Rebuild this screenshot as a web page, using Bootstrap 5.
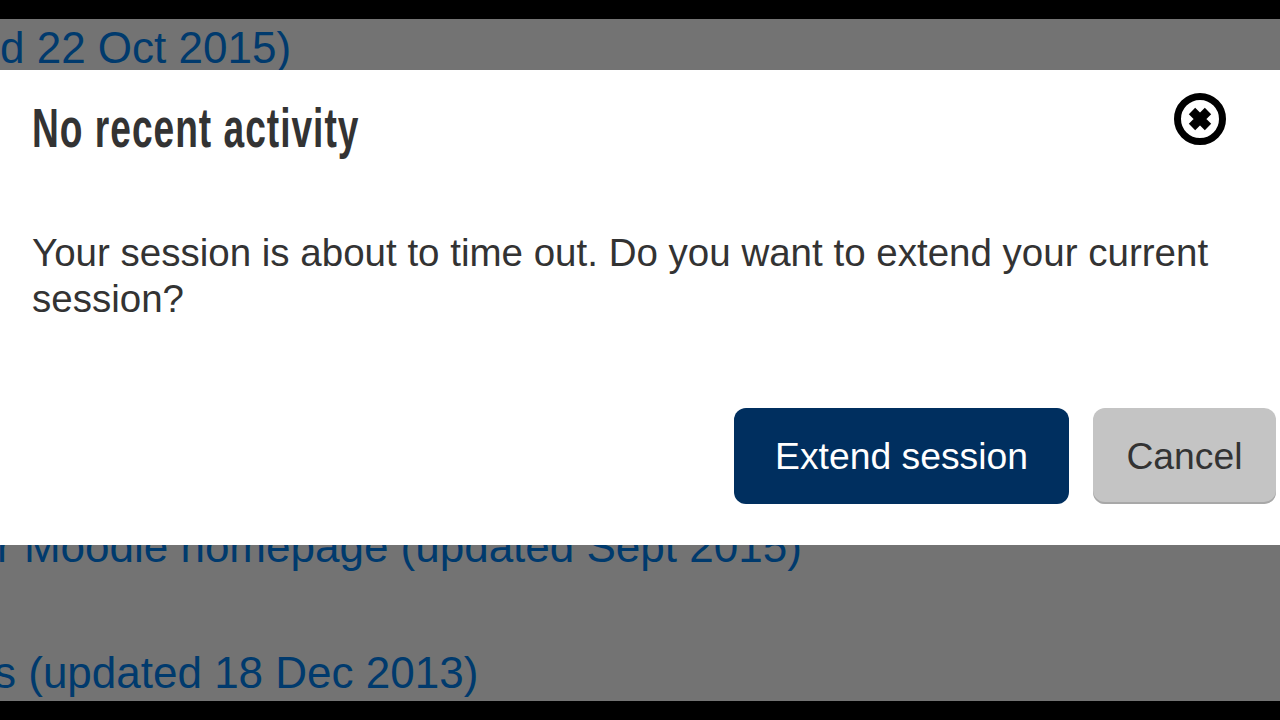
<!DOCTYPE html>
<html lang="en">
<head>
<meta charset="utf-8">
<title>No recent activity</title>
<link href="https://cdn.jsdelivr.net/npm/bootstrap@5.3.0/dist/css/bootstrap.min.css" rel="stylesheet">
<style>
html, body { width: 1280px; height: 720px; overflow: hidden; background: #000; font-family: "Liberation Sans", Arial, sans-serif; }
.stage-frame { height: 720px; padding: 19px 0; }
.dim-page { height: 682px; background: #737373; overflow: hidden; position: relative; }
.dim-link { display: block; font-size: 44px; line-height: 44px; color: #003a6d; text-decoration: none; white-space: nowrap; }
.dim-a { margin: 7px 0 0 0; }
.dim-b { margin: 455px 0 0 -3px; }
.dim-c { margin: 82px 0 0 -6px; }
.timeout-dialog { position: absolute; left: 0; right: 0; top: 51px; height: 475px; background: #fff; border: 0; border-radius: 0; color: #333; }
.timeout-head { padding: 23px 54px 0 32px; border: 0; align-items: flex-start; justify-content: space-between; }
.timeout-title { font-size: 56px; line-height: 68px; font-weight: 700; letter-spacing: 1.5px; margin: 1px 0 0; transform: scaleX(.663); transform-origin: left center; white-space: nowrap; color: #333; }
.close-ring { width: 52px; height: 52px; display: block; }
.close-hit { background: none; border: 0; padding: 0; }
.timeout-body { padding: 68px 32px 0; font-size: 38.53px; line-height: 46px; flex: 0 0 auto; }
.timeout-foot { padding: 0 4px 0 0; border: 0; gap: 24px; margin-top: auto; margin-bottom: 41px; }
.timeout-foot .btn { margin: 0; height: 96px; font-size: 37.3px; line-height: 1; padding: 2px 0 0; border-radius: 12px; border: 0; }
.go-btn { width: 335px; background: #002f5f; color: #fff; }
.stop-btn { width: 183px; background: #c4c4c4; color: #333; box-shadow: inset 0 -2px 0 #a8a8a8; }
</style>
</head>
<body>
<div class="stage-frame">
  <div class="dim-page">
    <a class="dim-link dim-a" href="#">d 22 Oct 2015)</a>
    <a class="dim-link dim-b" href="#">r Moodle homepage (updated Sept 2015)</a>
    <a class="dim-link dim-c" href="#">s (updated 18 Dec 2013)</a>
    <div class="modal-content timeout-dialog d-flex flex-column">
      <div class="modal-header timeout-head d-flex">
        <h5 class="modal-title timeout-title">No recent activity</h5>
        <button type="button" class="close-hit" aria-label="Close">
          <svg class="close-ring" viewBox="0 0 52 52" aria-hidden="true">
            <circle cx="26" cy="26" r="22.5" fill="none" stroke="#000" stroke-width="7"/>
            <path d="M18 18 L34 34 M34 18 L18 34" stroke="#000" stroke-width="9"/>
          </svg>
        </button>
      </div>
      <div class="modal-body timeout-body">Your session is about to time out. Do you want to extend your current session?</div>
      <div class="modal-footer timeout-foot d-flex justify-content-end">
        <button type="button" class="btn go-btn">Extend session</button>
        <button type="button" class="btn stop-btn">Cancel</button>
      </div>
    </div>
  </div>
</div>
<script src="https://cdn.jsdelivr.net/npm/bootstrap@5.3.0/dist/js/bootstrap.bundle.min.js"></script>
</body>
</html>
